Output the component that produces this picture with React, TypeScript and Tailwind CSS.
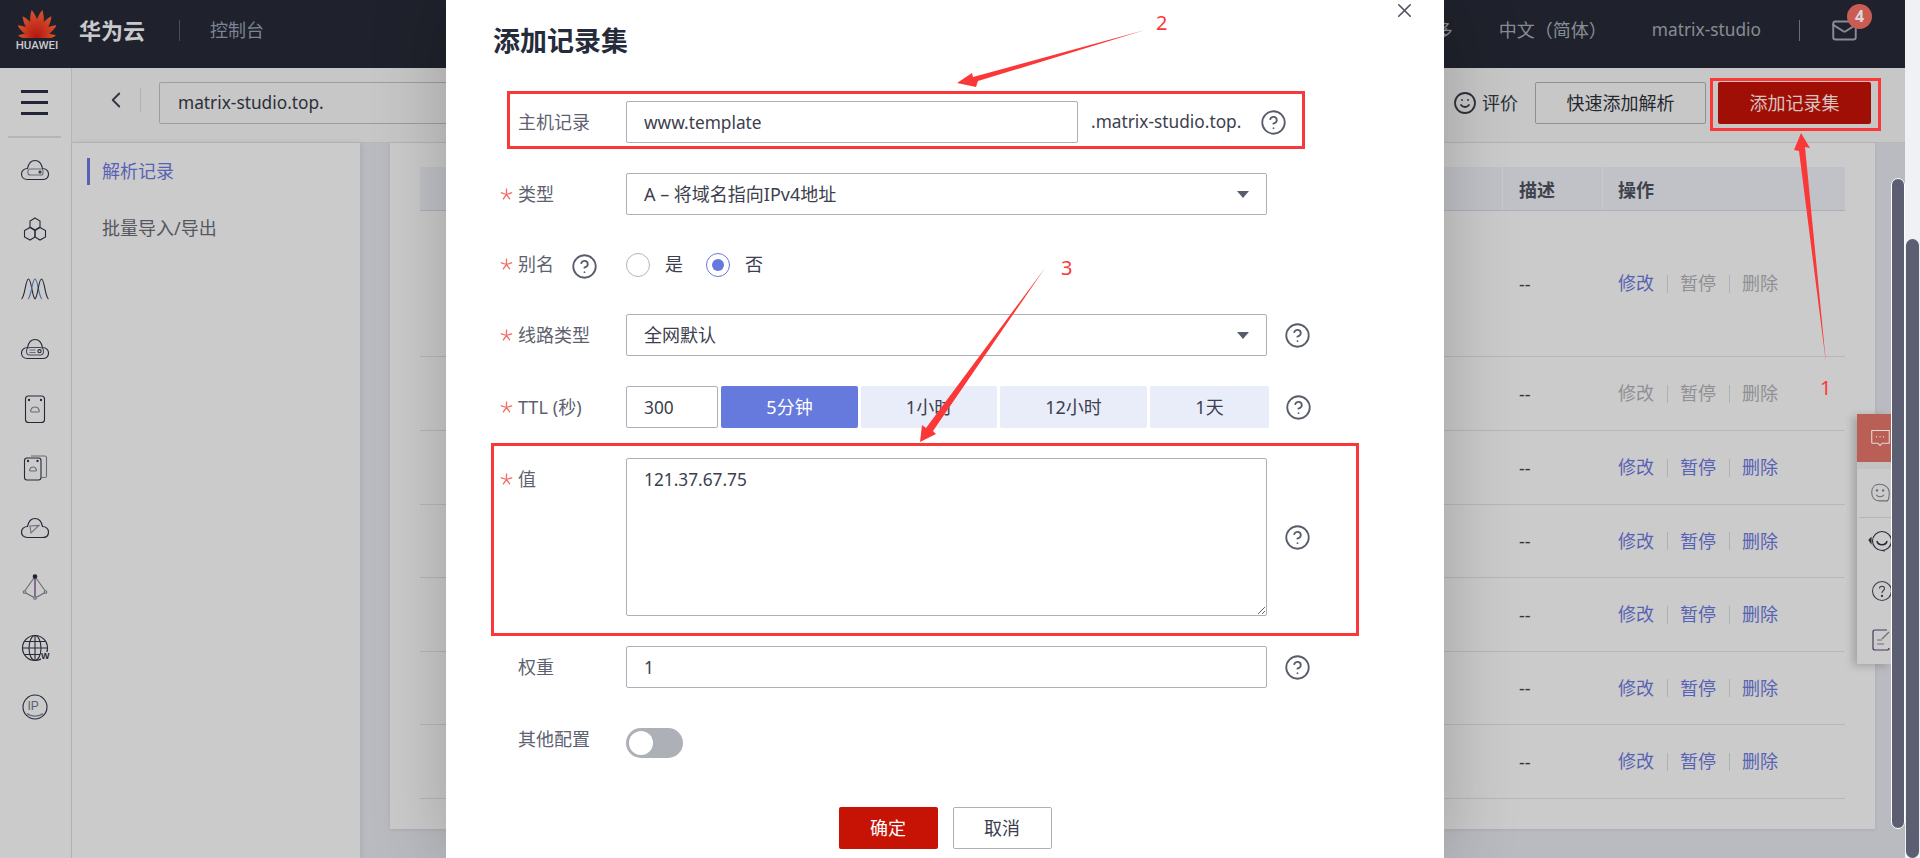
import type { ReactNode } from "react"
import { CircleHelp, ChevronLeft, X, Smile, Mail } from "lucide-react"

const rows = [
    { h: "h-[146px]", first: true, gray: false },
    { h: "h-[74px]", first: false, gray: true },
    { h: "h-[74px]", first: false, gray: false },
    { h: "h-[73px]", first: false, gray: false },
    { h: "h-[74px]", first: false, gray: false },
    { h: "h-[73px]", first: false, gray: false },
    { h: "h-[74px]", first: false, gray: false },
]

function HuaweiLogo() {
    const petals = [
        [-84, 0.68], [-58, 0.82], [-34, 0.92], [-11, 1],
        [11, 1], [34, 0.92], [58, 0.82], [84, 0.68],
    ]
    return (
        <div className="flex flex-col items-center w-[40px]">
            <svg width="38" height="29" viewBox="0 0 38 29">
                <defs>
                    <linearGradient id="petal" x1="0" y1="0" x2="0" y2="1">
                        <stop offset="0" stopColor="#d9552f" />
                        <stop offset="1" stopColor="#b3160f" />
                    </linearGradient>
                </defs>
                {petals.map(([r, s], i) => (
                    <path
                        key={i}
                        d="M0 0 C-5.5 -7 -5 -19 0 -28 C5 -19 5.5 -7 0 0Z"
                        fill="url(#petal)"
                        transform={`translate(19 28.5) rotate(${r}) scale(${s})`}
                    />
                ))}
            </svg>
            <span className="font-['Roboto',sans-serif] font-medium text-[11.5px] leading-[12px] text-[#c8c9cc] mt-[1px]">HUAWEI</span>
        </div>
    )
}

function RailIcon({ name }: { name: string }) {
    const cloud = "M6.5 23.5 C2.5 23.5 0.5 21 0.5 18 C0.5 15 3 12.5 6.5 12.5 C7.5 7.5 10.5 4.5 14 4.5 C17.5 4.5 20.5 7.5 21.5 12.5 C25 12.5 27.5 15 27.5 18 C27.5 21 25.5 23.5 21.5 23.5Z"
    return (
        <svg width="28" height="28" viewBox="0 0 28 28" fill="none" stroke="#262a38" strokeWidth="1.1">
            {name === "cloud1" && <>
                <path d={cloud} />
                <rect x="7" y="13" width="15" height="6" rx="2" stroke="#6a6d78" />
                <circle cx="19" cy="16" r="1" />
            </>}
            {name === "hex" && <>
                <path d="M14 2 L19 5 V11 L14 14 L9 11 V5Z" />
                <path d="M9 11.5 L14 14.5 V21 L9 24 L3.5 21 V14.5Z" />
                <path d="M19 11.5 L24.5 14.5 V21 L19 24 L14 21 V14.5Z" />
            </>}
            {name === "wave" && <>
                <path d="M0.5 24 C4 22 4.5 4 7.5 4 C10.5 4 11 22 14 24" />
                <path d="M7 24 C10.5 22 11 4 14 4 C17 4 17.5 22 21 24" stroke="#4a6a9a" />
                <path d="M14 24 C17 22 17.5 4 20.5 4 C23.5 4 24 22 27.5 24" />
            </>}
            {name === "cloud2" && <>
                <path d={cloud} />
                <rect x="5.5" y="12.5" width="17" height="7.5" rx="3.5" stroke="#4a4d5a" />
                <path d="M8.5 15h6M8.5 17.5h6" stroke="#6a6d78" />
                <circle cx="18.5" cy="16.2" r="1.6" />
            </>}
            {name === "card" && <>
                <rect x="4.5" y="1" width="19" height="26.5" rx="3" />
                <path d="M11 17 C9.5 17 9 15.5 10 14.8 C10.5 13 12 12 14 12 C16 12 17.5 13 17.8 14.8 C19 15.5 18.5 17 17 17Z" stroke="#6a6d78" />
                <circle cx="8" cy="5" r="0.6" fill="#262a38" />
                <circle cx="20" cy="5" r="0.6" fill="#262a38" />
            </>}
            {name === "cards" && <>
                <path d="M10 2 H24 C25 2 25.5 2.5 25.5 3.5 V22 Q25.5 23.5 24 23.5 H20.5" stroke="#6a6d78" />
                <rect x="3.5" y="4" width="16.5" height="22" rx="2.5" />
                <path d="M9.5 17 C8.5 17 8 15.5 9 15 C9.5 13.5 11 13 12 13 C13 13 14.5 13.5 15 15 C16 15.5 15.5 17 14.5 17Z" stroke="#6a6d78" />
                <circle cx="7" cy="7" r="0.6" fill="#262a38" />
                <circle cx="16.5" cy="7" r="0.6" fill="#262a38" />
            </>}
            {name === "cloud3" && <>
                <path d={cloud} strokeWidth="1.2" />
                <path d="M9 12 L18 11.5 L10 19Z" stroke="#6a6d78" />
            </>}
            {name === "pyramid" && <>
                <path d="M14 2.5 L25 18 L14 24 L3 18Z" stroke="#6a6d78" />
                <path d="M14 2.5 V24" stroke="#5a2a6a" strokeWidth="1.2" />
                <circle cx="14" cy="2.5" r="1.8" fill="#1c1f2a" />
                <circle cx="3.5" cy="18" r="1.3" fill="#cbcbcb" stroke="#6a6d78" />
                <circle cx="24.5" cy="18" r="1.3" fill="#cbcbcb" stroke="#6a6d78" />
                <circle cx="14" cy="24" r="1.3" fill="#cbcbcb" stroke="#6a6d78" />
            </>}
            {name === "globe" && <>
                <circle cx="14" cy="14" r="12.5" strokeWidth="1.2" />
                <ellipse cx="14" cy="14" rx="6" ry="12.5" />
                <path d="M14 1.5 V26.5 M1.5 14 H26.5 M3.5 7.5 H24.5 M3.5 20.5 H19" />
            </>}
            {name === "ip" && <>
                <circle cx="14" cy="14" r="12" strokeWidth="1.1" />
                <path d="M6 20.5 C10 24 18 24 22 20.5" stroke="#6a6d78" />
            </>}
        </svg>
    )
}

function Rail() {
    const icons = ["cloud1", "hex", "wave", "cloud2", "card", "cards", "cloud3", "pyramid", "globe", "ip"]
    return (
        <div className="w-[72px] shrink-0 bg-[#cbcbcb] border-r border-[#b5b5b5] flex flex-col items-center pr-[2px]">
            <div className="flex flex-col gap-[8px] mt-[22px] w-[27px]">
                <div className="h-[3px] bg-[#23263a]" />
                <div className="h-[3px] bg-[#23263a]" />
                <div className="h-[3px] bg-[#23263a]" />
            </div>
            <div className="w-[53px] h-[2px] bg-[#b5b5b5] mt-[21px] mb-[18px]" />
            <div className="flex flex-col gap-[31.7px]">
                {icons.map(n => (
                    <div key={n} className="relative w-[28px] h-[28px]">
                        <RailIcon name={n} />
                        {n === "globe" && <span className="absolute right-[-1px] bottom-[1px] font-['Liberation_Sans',sans-serif] text-[9px] leading-[9px] font-bold text-[#262a38] bg-[#cbcbcb]">W</span>}
                        {n === "ip" && <span className="absolute left-[7px] top-[6px] font-['Liberation_Sans',sans-serif] text-[12px] leading-[14px] text-[#5a5e72]">IP</span>}
                    </div>
                ))}
            </div>
        </div>
    )
}

function TableRow({ h, first, gray }: { h: string, first: boolean, gray: boolean }) {
    const blue = "text-[#5862b4]"
    const mute = "text-[#8f9094]"
    return (
        <div className={`${h} flex items-center justify-end border-b border-[#b7b7b9] text-[18px]`}>
            <div className="w-[100px] pl-[17px] text-[#33363f] leading-[24px]">--</div>
            <div className="w-[243px] pl-[16px] flex items-center">
                <span className={gray ? mute : blue}>修改</span>
                <span className="w-px h-[18px] bg-[#b0b0b2] mx-[12.5px]" />
                <span className={first || gray ? mute : blue}>暂停</span>
                <span className="w-px h-[18px] bg-[#b0b0b2] mx-[12.5px]" />
                <span className={first || gray ? mute : blue}>删除</span>
            </div>
        </div>
    )
}

function Page() {
    return (
        <div className="w-[1905px] h-[858px] flex flex-col">
            <div className="h-[68px] shrink-0 bg-[#1f222c] flex items-center pl-[17px] pr-[47px] pb-[8px]">
                <HuaweiLogo />
                <span className="ml-[22px] text-[22px] font-bold text-[#c9c9cb]">华为云</span>
                <div className="w-px h-[21px] bg-[#4a4d57] ml-[34px]" />
                <span className="ml-[30px] text-[18px] text-[#7d8394]">控制台</span>
                <div className="flex-1" />
                <span className="text-[18px] text-[#8a8c94]">更多</span>
                <span className="ml-[46px] text-[18px] text-[#8a8c94]">中文（简体）</span>
                <span className="ml-[45px] text-[17.3px] text-[#8a8c94]">matrix-studio</span>
                <div className="w-px h-[21px] bg-[#6a6d76] ml-[38px]" />
                <div className="relative ml-[31px]">
                    <Mail size={27} strokeWidth={1.7} className="text-[#8a8c94]" />
                    <span className="absolute left-[16px] top-[-13px] w-[25px] h-[25px] rounded-full bg-[#cb5c54] flex items-center justify-center text-[16px] font-bold text-[#d9d9d9]">4</span>
                </div>
            </div>
            <div className="flex-1 flex min-h-0">
                <Rail />
                <div className="flex-1 flex flex-col min-w-0">
                    <div className="h-[75px] shrink-0 bg-[#c7c7c7] border-b border-[#b7b7b7] flex items-start pt-[14px] pr-[34px]">
                        <div className="w-[32px]" />
                        <ChevronLeft size={26} strokeWidth={1.7} className="text-[#30343f] mt-[5px] -ml-[1px]" />
                        <div className="w-px h-[24px] bg-[#b2b2b2] ml-[11px] mt-[6px]" />
                        <div className="ml-[18px] w-[420px] h-[42px] border border-[#9c9ca2] rounded-[2px] pl-[18px] flex items-center text-[17.3px] text-[#2c2f3a]">matrix-studio.top.</div>
                        <div className="flex-1" />
                        <div className="h-[42px] flex items-center text-[18px] text-[#2c2f3a]">
                            <Smile size={24} strokeWidth={1.8} className="text-[#2f323c] mr-[5px]" />
                            评价
                        </div>
                        <div className="ml-[17px] w-[171px] h-[42px] border border-[#8f8f93] rounded-[2px] flex items-center justify-center text-[18px] text-[#25272f]">快速添加解析</div>
                        <div className="ml-[12px] w-[153px] h-[42px] bg-[#a00f05] rounded-[2px] flex items-center justify-center text-[18px] text-[#d5c4c0]">添加记录集</div>
                    </div>
                    <div className="flex-1 flex min-h-0">
                        <div className="w-[288px] shrink-0 bg-[#cbcbcb] shadow-[2px_0_6px_rgba(0,0,0,0.08)] relative pt-[15px] pl-[15px] text-[18px]">
                            <div className="h-[27px] border-l-[3px] border-[#5461b5] pl-[12px] flex items-center text-[#5862b4]">解析记录</div>
                            <div className="mt-[30px] h-[27px] pl-[15px] flex items-center text-[#55575f]">批量导入/导出</div>
                        </div>
                        <div className="flex-1 bg-[#b9bbc0] pl-[30px] pr-[30px] min-w-0">
                            <div className="h-[686px] bg-[#cbcbcb] pl-[30px] pr-[30px] pt-[24px] shadow-[0_1px_3px_rgba(0,0,0,0.08)]">
                                <div className="h-[44px] bg-[#c0c2c8] border-b border-[#aeb0b6] flex justify-end text-[18px] font-bold text-[#3f424b]">
                                    <div className="w-[100px] pl-[16px] pt-[3px] flex items-center border-l border-[#cacbd0]">描述</div>
                                    <div className="w-[243px] pl-[15px] pt-[3px] flex items-center border-l border-[#cacbd0]">操作</div>
                                </div>
                                {rows.map((r, i) => <TableRow key={i} {...r} />)}
                            </div>
                        </div>
                    </div>
                </div>
            </div>
        </div>
    )
}

function Asterisk() {
    return (
        <svg width="13" height="13" viewBox="0 0 26 26" stroke="#f26f68" strokeWidth="2.6" fill="none">
            <path d="M13 13 V1 M13 13 L24.4 9.3 M13 13 L20 22.7 M13 13 L6 22.7 M13 13 L1.6 9.3" />
        </svg>
    )
}

function Label({ text, req }: { text: ReactNode, req?: boolean }) {
    return (
        <div className="w-[180px] shrink-0 pl-[54px] flex items-center text-[18px] text-[#5e6270] h-[42px]">
            <span className="w-[18px] flex items-center">{req && <Asterisk />}</span>
            {text}
        </div>
    )
}

const boxClass = "border border-[#adb0b8] rounded-[2px] text-[#3c404d] outline-none"
const inputClass = `${boxClass} h-[42px] text-[17.3px]`

function Help({ className }: { className?: string }) {
    return <CircleHelp size={27} strokeWidth={1.6} className={`text-[#585d6c] shrink-0 ${className ?? ""}`} />
}

function Select({ value }: { value: string }) {
    return (
        <div className={`${boxClass} h-[42px] text-[18px] w-[641px] pl-[17px] pr-[17px] flex items-center justify-between`}>
            <span>{value}</span>
            <span className="w-0 h-0 border-x-[6px] border-x-transparent border-t-[7px] border-t-[#585d6c]" />
        </div>
    )
}

function Radio({ on, text }: { on?: boolean, text: string }) {
    return (
        <div className="flex items-center gap-[15px] text-[18px] text-[#3c404d]">
            <span className={`w-[24px] h-[24px] rounded-full border flex items-center justify-center ${on ? "border-[#6a78dc]" : "border-[#b2b4bb]"}`}>
                {on && <span className="w-[12px] h-[12px] rounded-full bg-[#6479db]" />}
            </span>
            {text}
        </div>
    )
}

function Modal() {
    const ttl = [
        { t: "5分钟", w: "w-[137px]", on: true },
        { t: "1小时", w: "w-[136px]", on: false },
        { t: "12小时", w: "w-[147px]", on: false },
        { t: "1天", w: "w-[119px]", on: false },
    ]
    return (
        <div className="absolute left-[446px] top-0 w-[998px] h-[858px] bg-white shadow-[0_0_70px_rgba(0,0,0,0.22)]">
            <X size={23} strokeWidth={1.6} className="absolute right-[28px] -top-px text-[#4d5160]" />
            <div className="pl-[47px] pt-[21px] h-[101px] text-[27px] leading-[40px] font-bold text-[#252b3a]">添加记录集</div>
            <div className="flex flex-col gap-[30px]">
                <div className="flex items-center">
                    <Label text="主机记录" />
                    <input readOnly value="www.template" className={`${inputClass} w-[452px] pl-[17px]`} />
                    <span className="ml-[13px] text-[17.3px] text-[#3c404d] -mt-[1px]">.matrix-studio.top.</span>
                    <Help className="ml-[19px]" />
                </div>
                <div className="flex items-center">
                    <Label text="类型" req />
                    <Select value="A – 将域名指向IPv4地址" />
                </div>
                <div className="flex items-center h-[39px] relative">
                    <Label text="别名" req />
                    <Help className="absolute left-[125px] top-[8px]" />
                    <Radio text="是" />
                    <div className="w-[23px]" />
                    <Radio on text="否" />
                </div>
                <div className="flex items-center">
                    <Label text="线路类型" req />
                    <Select value="全网默认" />
                    <Help className="ml-[17px]" />
                </div>
                <div className="flex items-center">
                    <Label text={<>TTL<span className="ml-[5px]">(秒)</span></>} req />
                    <input readOnly value="300" className={`${inputClass} w-[92px] pl-[17px] mr-[3px]`} />
                    <div className="flex gap-[3px]">
                        {ttl.map(b => (
                            <div key={b.t} className={`${b.w} h-[42px] rounded-[2px] flex items-center justify-center text-[18px] ${b.on ? "bg-[#6679dc] text-white" : "bg-[#e9edfa] text-[#3c404d]"}`}>{b.t}</div>
                        ))}
                    </div>
                    <Help className="ml-[16px]" />
                </div>
                <div className="flex items-center">
                    <div className="self-start"><Label text="值" req /></div>
                    <textarea readOnly value="121.37.67.75" className={`${boxClass} text-[17.3px] h-[158px] w-[641px] pl-[17px] pt-[8px] block`} />
                    <Help className="ml-[17px]" />
                </div>
                <div className="flex items-center">
                    <Label text="权重" />
                    <input readOnly value="1" className={`${inputClass} w-[641px] pl-[17px]`} />
                    <Help className="ml-[17px]" />
                </div>
            </div>
            <div className="flex items-start mt-[30px] h-[42px]">
                <Label text="其他配置" />
                <div className="mt-[10px] w-[57px] h-[30px] rounded-full bg-[#aeb0b8] p-[3px]">
                    <div className="w-[24px] h-[24px] rounded-full bg-white" />
                </div>
            </div>
            <div className="flex justify-center gap-[15px] mt-[47px]">
                <div className="w-[99px] h-[42px] rounded-[2px] bg-[#c71306] text-white text-[18px] flex items-center justify-center">确定</div>
                <div className="w-[99px] h-[42px] rounded-[2px] border border-[#adb0b8] text-[#3c404d] text-[18px] flex items-center justify-center">取消</div>
            </div>
        </div>
    )
}

function FloatPanel() {
    return (
        <div className="absolute left-[1857px] top-[414px] w-[34px] h-[250px] bg-[#cbcbcb] shadow-[-4px_2px_8px_rgba(0,0,0,0.2)] overflow-hidden">
            <div className="h-[48px] bg-[#b95f56] flex items-center pl-[13px]">
                <svg width="24" height="24" viewBox="0 0 24 24" fill="none" stroke="#e4dcda" strokeWidth="1.2">
                    <path d="M2 3.5 H22 V18 H14 L11.5 20.5 L9 18 H3 Q2 18 2 17Z" />
                    <path d="M7 10.5h1M11 10.5h1M15 10.5h1" strokeWidth="1.6" />
                </svg>
            </div>
            <div className="h-[7px] bg-[#c3c3c3]" />
            <div className="h-[48px] flex items-center pl-[13px]">
                <svg width="24" height="24" viewBox="0 0 24 24" fill="none" stroke="#6c6e76" strokeWidth="1.2">
                    <path d="M11 2 C5 2 2 6 2 11 C2 17 5 21 11 21 H20 C22 18 22 15 22 11 C22 6 17 2 11 2Z" />
                    <circle cx="8" cy="9" r="0.8" fill="#6c6e76" />
                    <circle cx="15" cy="9" r="0.8" fill="#6c6e76" />
                    <path d="M7 14 C9 17 14 17 16 14" />
                </svg>
            </div>
            <div className="h-px ml-[2px] bg-[#b5b5b5]" />
            <div className="mt-[12px] pl-[11px]">
                <svg width="26" height="24" viewBox="0 0 26 24" fill="none" stroke="#262a38" strokeWidth="1.1">
                    <circle cx="14" cy="11" r="9.5" />
                    <path d="M9 11 C10 16 18 16 19 11" strokeWidth="1.5" />
                    <path d="M3 8 L1 10 L3 13Z" fill="#262a38" />
                    <path d="M14 20.5 L17 21" />
                </svg>
            </div>
            <div className="mt-[25px] pl-[13px]">
                <svg width="24" height="24" viewBox="0 0 24 24" fill="none" stroke="#3a3d4a" strokeWidth="1.1">
                    <circle cx="12" cy="12" r="9.5" />
                    <path d="M9.5 9.5 C9.5 6.5 14.5 6.5 14.5 9.5 C14.5 11.5 12 11.5 12 14" />
                    <circle cx="12" cy="17" r="0.6" fill="#3a3d4a" />
                </svg>
            </div>
            <div className="mt-[25px] pl-[15px]">
                <svg width="24" height="24" viewBox="0 0 24 24" fill="none" stroke="#4a3a5a" strokeWidth="1.2">
                    <path d="M15 2 H3 Q1 2 1 4 V20 Q1 22 3 22 H15 Q17 22 17 20" />
                    <path d="M5 12 H10 M5 16 H12" stroke="#6c6e76" />
                    <path d="M10 11 L17 4" stroke="#6c6e76" />
                </svg>
            </div>
        </div>
    )
}

function Annotations() {
    return (
        <>
            <div className="absolute left-[507px] top-[91px] w-[798px] h-[58px] border-[3px] border-[#fb3838]" />
            <div className="absolute left-[491px] top-[443px] w-[868px] h-[193px] border-[3px] border-[#fb3838]" />
            <div className="absolute left-[1710px] top-[78px] w-[171px] h-[53px] border-[3px] border-[#fb3838]" />
            <svg className="absolute left-0 top-0 pointer-events-none" width="1920" height="858" fill="#fb3838">
                <polygon points="1801,133 1810,148 1805,147 1826,363 1799,151 1794,150" />
                <polygon points="957,83 972,73 973,77 1145,30 978,81 976,87" />
                <polygon points="920,442 922,425 926,428 1045,268 933,431 936,434" />
            </svg>
            <span className="absolute left-[1820px] top-[374px] text-[20px] leading-[28px] text-[#fb3838]">1</span>
            <span className="absolute left-[1156px] top-[9px] text-[20px] leading-[28px] text-[#fb3838]">2</span>
            <span className="absolute left-[1061px] top-[254px] text-[20px] leading-[28px] text-[#fb3838]">3</span>
        </>
    )
}

export default function App() {
    return (
        <div className="relative w-[1920px] h-[858px] overflow-hidden bg-[#f0f1f5] font-['Noto_Sans','Noto_Sans_CJK_SC',sans-serif]">
            <Page />
            <FloatPanel />
            <Modal />
            <div className="absolute left-[1891px] top-[178px] w-[14px] h-[651px] rounded-full bg-[#5c5f72] border border-white" />
            <div className="absolute left-[1906px] top-[239px] w-[13px] h-[619px] rounded-full bg-[#5c5f72]" />
            <Annotations />
        </div>
    )
}
